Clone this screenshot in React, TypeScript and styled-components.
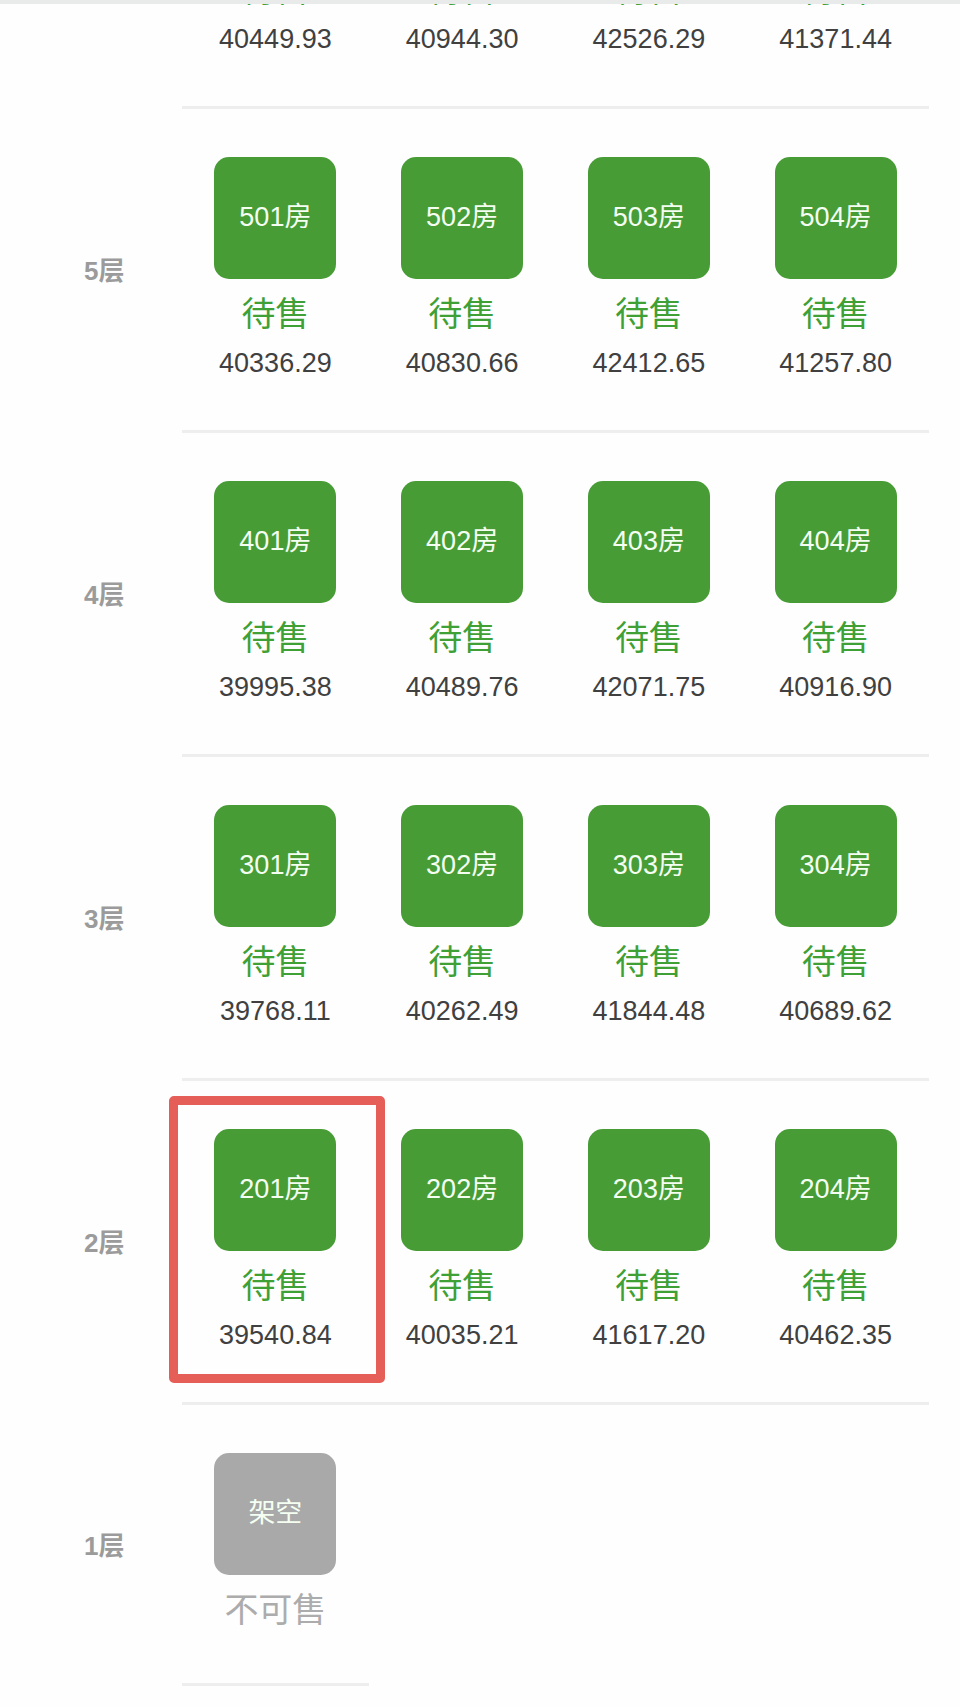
import React from "react";
import styled, { createGlobalStyle } from "styled-components";

const GlobalStyle = createGlobalStyle`
  *, *::before, *::after { box-sizing: border-box; }
  body {
    margin: 0;
    background: #fefefe;
    font-family: "Liberation Sans", "Noto Sans CJK SC", sans-serif;
  }
`;

type Tone = "sale" | "closed";

const tones = {
  sale: { tile: "#479c36", text: "#3fa035" },
  closed: { tile: "#a9a9a9", text: "#acacac" },
};

const Page = styled.main`
  position: relative;
  overflow: hidden;
  padding: 0 31px 22px 0;
`;

const TopEdge = styled.div`
  position: absolute;
  top: 0;
  left: 0;
  right: 0;
  height: 4px;
  background: #e9ebea;
`;

const Board = styled.table<{ $lift: number }>`
  width: 100%;
  margin-top: -${(p) => p.$lift}px;
  table-layout: fixed;
  border-collapse: separate;
  border-spacing: 0;
`;

const FloorColumn = styled.col`
  width: 182px;
`;

const FloorLabel = styled.th`
  padding: 0 0 0 84px;
  text-align: left;
  vertical-align: middle;
  font-size: 26px;
  line-height: 36px;
  font-weight: 700;
  color: #9b9b9b;
`;

const RoomCell = styled.td<{ $cut?: boolean }>`
  position: relative;
  padding: ${(p) => (p.$cut ? 0 : 48)}px 0 49px;
  border-bottom: 3px solid #eeeeee;
  text-align: center;
  vertical-align: top;
`;

const Tile = styled.button<{ $tone: Tone }>`
  display: block;
  width: 122px;
  height: 122px;
  margin: 0 auto 11px;
  padding: 0 0 2px;
  border: 0;
  border-radius: 15px;
  background: ${(p) => tones[p.$tone].tile};
  color: #f4fff2;
  font-family: inherit;
  font-size: 27px;
  line-height: 36px;
`;

const Status = styled.div<{ $tone: Tone }>`
  font-size: 34px;
  line-height: 48px;
  color: ${(p) => tones[p.$tone].text};
`;

const Price = styled.div`
  padding-top: 7px;
  font-size: 27px;
  line-height: 36px;
  color: #404040;
`;

const Marker = styled.span`
  position: absolute;
  top: 15px;
  right: -16px;
  bottom: 19px;
  left: -13px;
  z-index: 1;
  border: 9px solid #e65e58;
  border-radius: 5px;
  pointer-events: none;
`;

interface Room {
  name?: string;
  price?: string;
  tone: Tone;
  marked?: boolean;
}

interface Floor {
  label?: string;
  rooms: Room[];
}

const forSale = (floor: number, prices: string[], marked?: number): Floor => ({
  label: `${floor}层`,
  rooms: prices.map((price, i) => ({
    name: `${floor}0${i + 1}房`,
    price,
    tone: "sale",
    marked: marked === i,
  })),
});

const floors: Floor[] = [
  {
    rooms: ["40449.93", "40944.30", "42526.29", "41371.44"].map((price) => ({
      price,
      tone: "sale",
    })),
  },
  forSale(5, ["40336.29", "40830.66", "42412.65", "41257.80"]),
  forSale(4, ["39995.38", "40489.76", "42071.75", "40916.90"]),
  forSale(3, ["39768.11", "40262.49", "41844.48", "40689.62"]),
  forSale(2, ["39540.84", "40035.21", "41617.20", "40462.35"], 0),
  { label: "1层", rooms: [{ name: "架空", tone: "closed" }] },
];

const statusText = { sale: "待售", closed: "不可售" };

export default function App() {
  return (
    <>
      <GlobalStyle />
      <Page>
        <Board $lift={34}>
          <colgroup>
            <FloorColumn />
            <col />
            <col />
            <col />
            <col />
          </colgroup>
          <tbody>
            {floors.map((floor, row) => (
              <tr key={row}>
                {floor.label ? (
                  <FloorLabel scope="row">{floor.label}</FloorLabel>
                ) : (
                  <td />
                )}
                {floor.rooms.map((room, i) => (
                  <RoomCell key={i} $cut={!room.name}>
                    {room.name && (
                      <Tile type="button" $tone={room.tone}>
                        {room.name}
                      </Tile>
                    )}
                    <Status $tone={room.tone}>{statusText[room.tone]}</Status>
                    {room.price && <Price>{room.price}</Price>}
                    {room.marked && <Marker />}
                  </RoomCell>
                ))}
              </tr>
            ))}
          </tbody>
        </Board>
        <TopEdge />
      </Page>
    </>
  );
}
